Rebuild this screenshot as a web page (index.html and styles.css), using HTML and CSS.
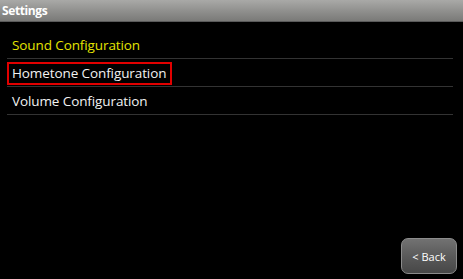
FILE: index.html
```html
<!DOCTYPE html>
<html lang="en">
<head>
  <meta charset="UTF-8" />
  <title>Settings</title>
  <link rel="stylesheet" href="styles.css">
</head>
<body>
  <div class="titlebar">Settings</div>

  <ul class="menu">
    <li class="menu-item selected"><span class="label">Sound Configuration</span></li>
    <li class="menu-item focused"><span class="label">Hometone Configuration</span></li>
    <li class="menu-item"><span class="label">Volume Configuration</span></li>
  </ul>

  <div class="footer">
    <button class="back-btn">&lt; Back</button>
  </div>
</body>
</html>
```

FILE: styles.css
```css
html, body {
  height: 100%;
}
body {
  margin: 0;
  background: #000;
  color: #f2f2f2;
  font-family: "Open Sans", "Noto Sans", sans-serif;
  display: flex;
  flex-direction: column;
}
.titlebar {
  height: 22px;
  line-height: 21px;
  padding-left: 2px;
  font-size: 12px;
  font-weight: bold;
  color: #fff;
  background: linear-gradient(#a9a9a7, #8c8c8a 60%, #7a7a78);
  border-bottom: 1px solid #5a5a5a;
  box-sizing: border-box;
  letter-spacing: -0.4px;
}
.menu {
  list-style: none;
  margin: 9px 10px 0 7px;
  padding: 0;
  flex: 1;
}
.menu-item {
  height: 27px;
  display: flex;
  align-items: center;
  border-bottom: 1px solid #333;
  font-size: 13.5px;
  letter-spacing: -0.1px;
}
.label {
  padding-left: 5px;
}
.selected .label {
  color: #e4e400;
}
.focused .label {
  border: 2px solid #e10000;
  height: 19px;
  line-height: 19px;
  padding: 0 4px 0 3px;
  margin-top: 2px;
}
.footer {
  display: flex;
  justify-content: flex-end;
  padding: 0 6px 5px 0;
}
.back-btn {
  width: 56px;
  height: 36px;
  border: 1px solid #8c8c8c;
  border-radius: 7px;
  background: linear-gradient(#727272, #5a5a5a 50%, #474747);
  color: #fff;
  font-family: "Open Sans", "Noto Sans", sans-serif;
  font-size: 11px;
  padding: 0;
}
```
